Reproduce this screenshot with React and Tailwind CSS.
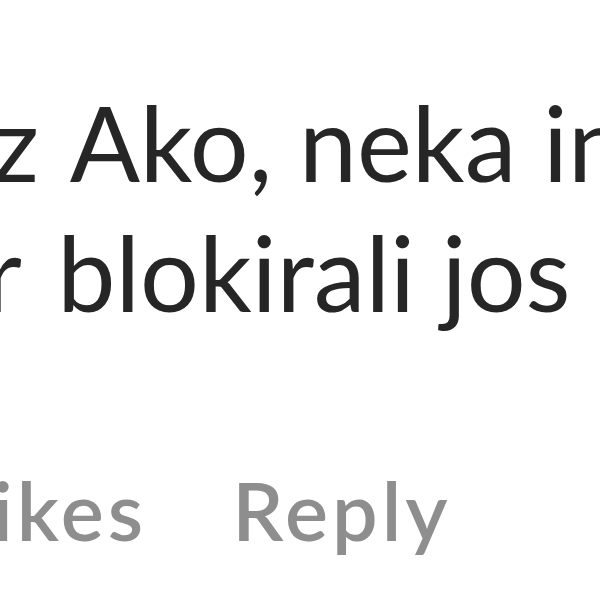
export default function App() {
  return (
    <div className="w-[600px] h-[600px] overflow-hidden bg-white relative blur-[0.7px]" style={{ fontFamily: 'Lato, sans-serif' }}>
      <div className="pt-[77px] text-[#262626] text-[104px] leading-[130px] whitespace-nowrap">
        <div className="ml-[-8px]"><span className="mr-[4px]">{"z "}</span>Ako, neka instagram</div>
        <div className="ml-[-74px]"><span className="mr-[11px]">{"ur "}</span>blokirali jos</div>
      </div>
      <div className="mt-[123px] flex items-baseline gap-[85px] text-[#8e8e8e] font-semibold text-[81px] tracking-[4px] leading-[100px] whitespace-nowrap">
        <span className="ml-[-31px]">likes</span>
        <span>Reply</span>
      </div>
    </div>
  );
}
